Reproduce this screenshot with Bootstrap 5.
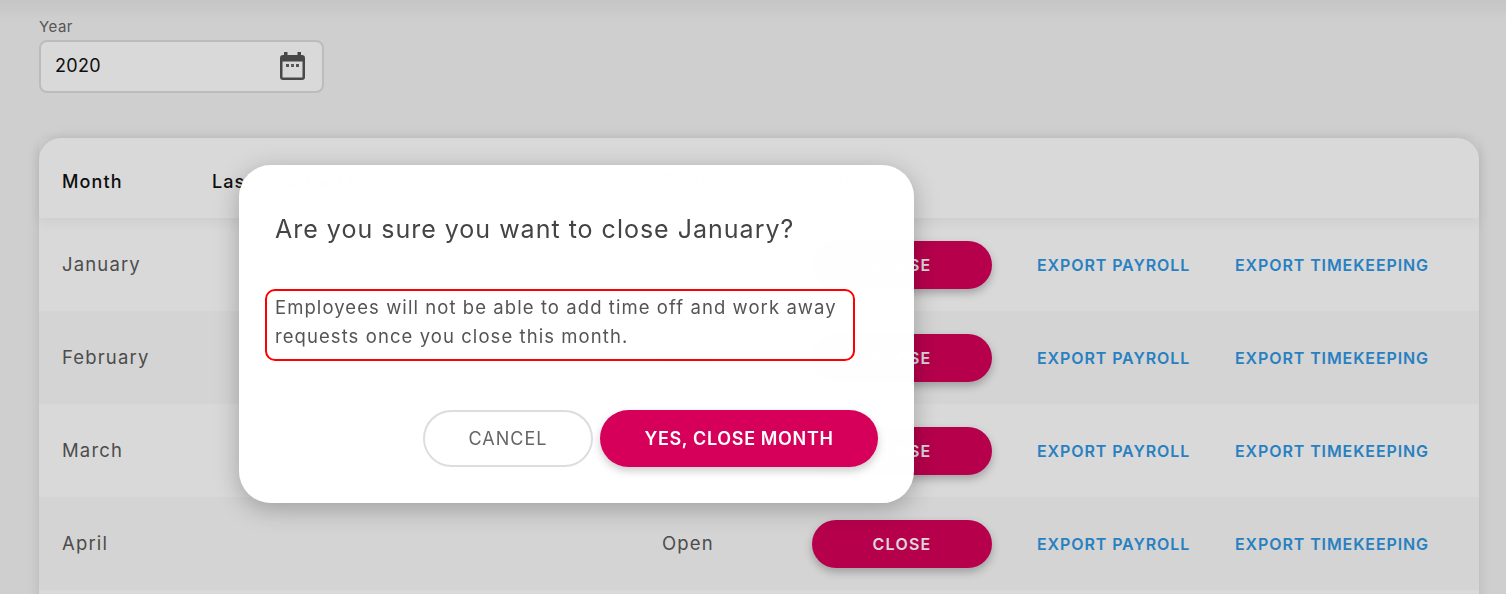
<!DOCTYPE html>
<html lang="en">
<head>
    <meta charset="UTF-8">
    <meta name="viewport" content="width=device-width, initial-scale=1.0">
    <title>Close Month</title>
    <link href="https://cdn.jsdelivr.net/npm/bootstrap@5.3.3/dist/css/bootstrap.min.css" rel="stylesheet">
    <style>
        body { font-family: Inter, "Open Sans", sans-serif; color: #5a5a5a; background: linear-gradient(#e8e8e8, #f4f4f4 22px) no-repeat #f4f4f4; }
        .page-wrap { padding: 18px 27px 0 39px; }
        .year-label { font-size: 15px; line-height: 18px; margin-bottom: 4px; color: #666; letter-spacing: .5px; }
        .year-box { width: 285px; height: 53px; background: #fff; border: 2px solid #ddd; border-radius: 8px; padding: 0 17px 0 14px; font-size: 18px; color: #111; }
        .year-box span { padding-bottom: 2px; letter-spacing: .3px; }
        .year-box svg { margin-top: -2px; }
        .month-card { margin-top: 45px; background: #fff; border-radius: 22px 22px 0 0; box-shadow: 0 0 14px rgba(0,0,0,.12); }
        .head-row { height: 80px; padding: 6px 0 0 23px; font-size: 18px; font-weight: 500; color: #111; letter-spacing: 1.1px; position: relative; z-index: 1; box-shadow: 0 4px 12px rgba(0,0,0,.06); }
        .body-row { height: 93px; padding-left: 23px; font-size: 18.5px; letter-spacing: 1.15px; }
        .body-row:nth-child(even) { background: #f9f9f9; }
        .col-month { width: 150px; }
        .col-by { width: 450px; }
        .col-status { width: 150px; }
        .close-btn { width: 180px; height: 48px; border: 0; border-radius: 24px; background: #d6005a; color: #fff; font-size: 16px; font-weight: 600; letter-spacing: 1.2px; box-shadow: 0 4px 8px rgba(0,0,0,.25); margin-right: 45px; }
        .close-btn:hover { background: #d6005a; color: #fff; }
        .export-link { font-size: 16px; font-weight: 600; letter-spacing: .9px; color: #2f97e3; text-decoration: none; white-space: nowrap; }
        .export-pay { width: 198px; }
        .modal-backdrop { --bs-backdrop-opacity: .15; }
        .close-dialog { max-width: 675px; margin: 165px 0 0 239px; }
        .close-dialog .modal-content { background: rgba(255,255,255,.995); border: 0; border-radius: 32px; padding: 36px; box-shadow: 0 6px 24px rgba(0,0,0,.25); }
        .close-title { font-size: 25px; line-height: 56px; font-weight: 400; letter-spacing: 1px; color: #444; margin: 0 0 32px; }
        .close-text { width: 590px; margin: 0 0 49px -10px; padding: 2px 8px 8px; border: 2px solid #f00; border-radius: 10px; font-size: 18.5px; line-height: 29px; letter-spacing: 1.07px; color: #555; white-space: nowrap; }
        .close-actions { gap: 7px; }
        .btn-cancel, .btn-yes { height: 57px; border-radius: 29px; font-size: 18px; }
        .btn-cancel { width: 170px; background: #fff; border: 2px solid #ddd; color: #666; letter-spacing: 1px; }
        .btn-yes { width: 278px; background: #d6005a; border: 0; color: #fff; font-weight: 600; letter-spacing: .65px; box-shadow: 0 4px 8px rgba(0,0,0,.2); }
        .btn-yes:hover { background: #d6005a; color: #fff; }
    </style>
</head>
<body class="overflow-hidden">

<div class="page-wrap">
    <!-- Year picker -->
    <div class="year-label">Year</div>
    <div class="year-box d-flex align-items-center justify-content-between">
        <span>2020</span>
        <svg width="25" height="28" viewBox="0 0 25 28">
            <path fill="#555" d="M4 0h3.500v3h10V0H21v3h1a3 3 0 0 1 3 3v19a3 3 0 0 1-3 3H3a3 3 0 0 1-3-3V6a3 3 0 0 1 3-3h1z"/>
            <rect x="2.500" y="9.500" width="20" height="16" fill="#fff"/>
            <rect x="6" y="12" width="3" height="3" fill="#566478"/>
            <rect x="11" y="12" width="3" height="3" fill="#6e6a5c"/>
            <rect x="16" y="12" width="3" height="3" fill="#566478"/>
        </svg>
    </div>

    <!-- Months -->
    <div class="month-card">
        <div class="head-row d-flex align-items-center">
            <div class="col-month">Month</div>
            <div class="col-by">Last modified by</div>
            <div class="col-status">Status</div>
            <div>Actions</div>
        </div>
        <div id="month-rows"></div>
    </div>
</div>

<div class="modal-backdrop show"></div>

<!-- Confirm dialog -->
<div class="modal d-block">
    <div class="modal-dialog close-dialog">
        <div class="modal-content">
            <h5 class="close-title">Are you sure you want to close January?</h5>
            <p class="close-text">Employees will not be able to add time off and work away<br>requests once you close this month.</p>
            <div class="close-actions d-flex justify-content-end">
                <button type="button" class="btn btn-cancel">CANCEL</button>
                <button type="button" class="btn btn-yes">YES, CLOSE MONTH</button>
            </div>
        </div>
    </div>
</div>

<script>
    const months = ['January', 'February', 'March', 'April', 'May'];
    const rows = document.getElementById('month-rows');
    months.forEach(function(name) {
        const row = document.createElement('div');
        row.className = 'body-row d-flex align-items-center';
        row.innerHTML = '<div class="col-month">' + name + '</div><div class="col-by"></div><div class="col-status">Open</div>' +
            '<button type="button" class="btn close-btn">CLOSE</button>' +
            '<a href="#" class="export-link export-pay">EXPORT PAYROLL</a><a href="#" class="export-link">EXPORT TIMEKEEPING</a>';
        rows.appendChild(row);
    });
</script>

<script src="https://cdn.jsdelivr.net/npm/bootstrap@5.3.3/dist/js/bootstrap.bundle.min.js"></script>
</body>
</html>
